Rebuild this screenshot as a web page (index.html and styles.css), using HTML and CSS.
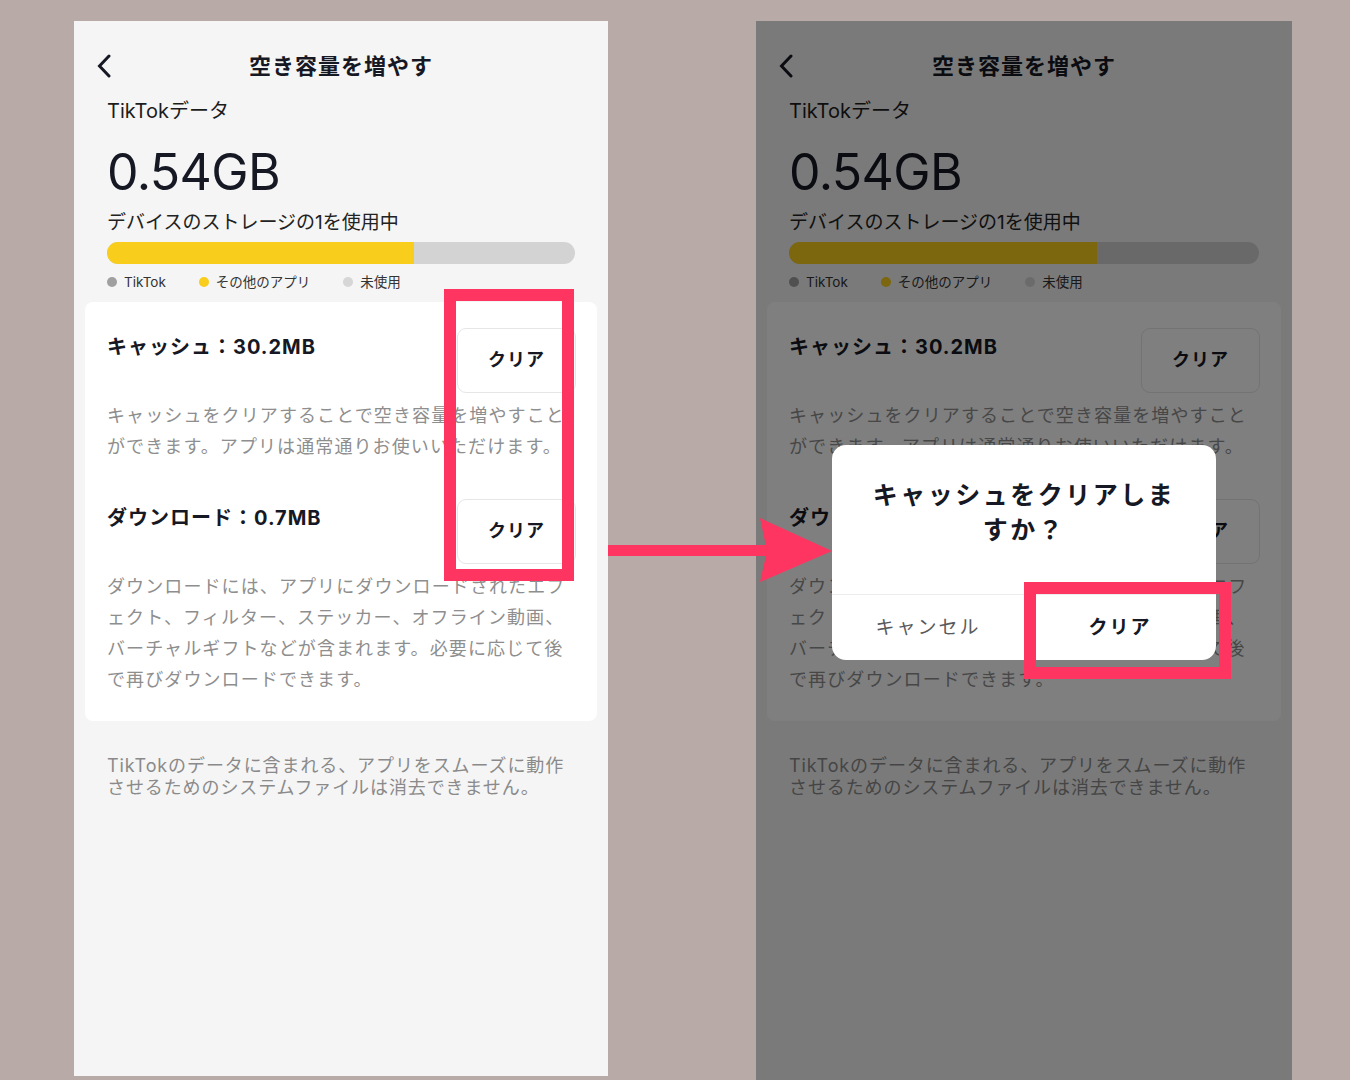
FILE: index.html
```html
<!DOCTYPE html>
<html lang="ja">
<head>
<meta charset="utf-8">
<title>空き容量を増やす</title>
<link rel="stylesheet" href="styles.css">
</head>
<body>
<div class="stage">
  <div class="phone phone-left">
    <header class="nav">
      <svg class="back" viewBox="0 0 14 24"><path d="M12 2 L2.5 12 L12 22"/></svg>
      <h1 class="nav-title">空き容量を増やす</h1>
      <span></span>
    </header>
    <div class="summary">
      <p class="data-label">TikTokデータ</p>
      <p class="data-size">0.54GB</p>
      <p class="data-usage">デバイスのストレージの1を使用中</p>
      <div class="bar"><div class="bar-fill" style="width:65.5%"></div></div>
      <ul class="legend">
        <li><span class="dot dot-tiktok"></span>TikTok</li>
        <li><span class="dot dot-other"></span>その他のアプリ</li>
        <li><span class="dot dot-free"></span>未使用</li>
      </ul>
    </div>
    <section class="card">
      <div class="item">
        <div class="item-head">
          <h2 class="item-title">キャッシュ：30.2MB</h2>
          <button class="clear-btn">クリア</button>
        </div>
        <p class="item-desc">キャッシュをクリアすることで空き容量を増やすこと<br>ができます。アプリは通常通りお使いいただけます。</p>
      </div>
      <div class="item">
        <div class="item-head">
          <h2 class="item-title">ダウンロード：0.7MB</h2>
          <button class="clear-btn">クリア</button>
        </div>
        <p class="item-desc">ダウンロードには、アプリにダウンロードされたエフ<br>ェクト、フィルター、ステッカー、オフライン動画、<br>バーチャルギフトなどが含まれます。必要に応じて後<br>で再びダウンロードできます。</p>
      </div>
    </section>
    <p class="footnote">TikTokのデータに含まれる、アプリをスムーズに動作<br>させるためのシステムファイルは消去できません。</p>
  </div>

  <div class="phone phone-right">
    <header class="nav">
      <svg class="back" viewBox="0 0 14 24"><path d="M12 2 L2.5 12 L12 22"/></svg>
      <h1 class="nav-title">空き容量を増やす</h1>
      <span></span>
    </header>
    <div class="summary">
      <p class="data-label">TikTokデータ</p>
      <p class="data-size">0.54GB</p>
      <p class="data-usage">デバイスのストレージの1を使用中</p>
      <div class="bar"><div class="bar-fill" style="width:65.5%"></div></div>
      <ul class="legend">
        <li><span class="dot dot-tiktok"></span>TikTok</li>
        <li><span class="dot dot-other"></span>その他のアプリ</li>
        <li><span class="dot dot-free"></span>未使用</li>
      </ul>
    </div>
    <section class="card">
      <div class="item">
        <div class="item-head">
          <h2 class="item-title">キャッシュ：30.2MB</h2>
          <button class="clear-btn">クリア</button>
        </div>
        <p class="item-desc">キャッシュをクリアすることで空き容量を増やすこと<br>ができます。アプリは通常通りお使いいただけます。</p>
      </div>
      <div class="item">
        <div class="item-head">
          <h2 class="item-title">ダウンロード：0.7MB</h2>
          <button class="clear-btn">クリア</button>
        </div>
        <p class="item-desc">ダウンロードには、アプリにダウンロードされたエフ<br>ェクト、フィルター、ステッカー、オフライン動画、<br>バーチャルギフトなどが含まれます。必要に応じて後<br>で再びダウンロードできます。</p>
      </div>
    </section>
    <p class="footnote">TikTokのデータに含まれる、アプリをスムーズに動作<br>させるためのシステムファイルは消去できません。</p>
    <div class="dim"></div>
    <div class="dialog">
      <p class="dialog-title">キャッシュをクリアしま<br>すか？</p>
      <div class="dialog-actions">
        <button class="dialog-btn dialog-cancel">キャンセル</button>
        <button class="dialog-btn dialog-confirm">クリア</button>
      </div>
    </div>
  </div>

  <svg class="arrow" viewBox="0 0 240 100">
    <rect x="8" y="45" width="164" height="11"/>
    <polygon points="160,18 232,51 160,82 167,51"/>
  </svg>
  <div class="mark mark-a"></div>
  <div class="mark mark-b"></div>
</div>
</body>
</html>
```

FILE: styles.css
```css
html, body {
  margin: 0;
  padding: 0;
}

body {
  background: #b8aaa6;
  font-family: Inter, "Noto Sans CJK JP", sans-serif;
  color: #161823;
}

.stage {
  position: relative;
  width: 1350px;
  height: 1080px;
  overflow: hidden;
  box-sizing: border-box;
  padding: 21px 0 0 74px;
  display: flex;
  align-items: flex-start;
  gap: 148px;
}

.phone {
  position: relative;
  flex: none;
  background: #f5f5f5;
  overflow: hidden;
}

.phone-left {
  width: 534px;
  height: 1055px;
}

.phone-right {
  width: 536px;
  height: 1059px;
}

/* header */
.nav {
  display: grid;
  grid-template-columns: 60px 1fr 60px;
  align-items: center;
  height: 30px;
  padding-top: 30px;
}

.back {
  width: 14px;
  height: 24px;
  margin-left: 23px;
}

.back path {
  fill: none;
  stroke: #161823;
  stroke-width: 3;
  stroke-linecap: round;
  stroke-linejoin: miter;
}

.nav-title {
  margin: 0;
  text-align: center;
  font-size: 22px;
  line-height: 30px;
  font-weight: 700;
  letter-spacing: 1px;
  color: #161823;
}

/* summary */
.summary {
  padding: 0 33px;
}

.data-label {
  margin: 17px 0 0;
  font-size: 20px;
  line-height: 26px;
  color: #1c1c1c;
}

.data-size {
  margin: 18px 0 0;
  font-size: 50px;
  line-height: 60px;
  letter-spacing: -0.6px;
  color: #161823;
}

.data-usage {
  margin: 8px 0 0;
  font-size: 19px;
  line-height: 26px;
  color: #222;
}

.bar {
  margin-top: 6px;
  height: 22px;
  border-radius: 11px;
  background: #d3d3d3;
  overflow: hidden;
}

.bar-fill {
  height: 100%;
  background: #f8cd1c;
}

.legend {
  list-style: none;
  margin: 9px 0 0;
  padding: 0;
  display: flex;
  gap: 33px;
  font-size: 13.5px;
  line-height: 18px;
  color: #333;
}

.legend li {
  display: flex;
  align-items: center;
  gap: 7px;
}

.dot {
  width: 10px;
  height: 10px;
  border-radius: 50%;
}

.dot-tiktok { background: #a0a0a0; }
.dot-other { background: #f8cd1c; }
.dot-free { background: #d6d6d6; }

/* card */
.card {
  margin: 11px 11px 0;
  background: #fff;
  border-radius: 8px;
  padding: 26px 21px 26px 22px;
}

.item + .item {
  margin-top: 37px;
}

.item-head {
  display: flex;
  justify-content: space-between;
  align-items: flex-start;
}

.item-title {
  margin: 0;
  padding-top: 5px;
  font-size: 20px;
  line-height: 28px;
  font-weight: 700;
  letter-spacing: 1px;
  color: #161823;
}

.clear-btn {
  width: 119px;
  height: 65px;
  border: 1px solid #e6e6e6;
  border-radius: 9px;
  background: #fff;
  font-family: inherit;
  font-size: 18px;
  font-weight: 700;
  letter-spacing: 1px;
  color: #161823;
  padding: 0 0 5px;
}

.item-desc {
  margin: 7px 0 0;
  font-size: 18px;
  line-height: 31px;
  letter-spacing: 1.1px;
  white-space: nowrap;
  color: #8e8e8e;
}

.footnote {
  margin: 34px 0 0;
  padding: 0 33px;
  font-size: 18px;
  line-height: 22px;
  letter-spacing: 0.9px;
  white-space: nowrap;
  color: #8a8a8a;
}

/* dim + dialog */
.dim {
  position: absolute;
  inset: 0;
  background: rgba(0, 0, 0, 0.5);
}

.dialog {
  position: absolute;
  left: 76px;
  top: 424px;
  width: 384px;
  height: 215px;
  background: #fff;
  border-radius: 14px;
  overflow: hidden;
  display: flex;
  flex-direction: column;
}

.dialog-title {
  flex: 1;
  margin: 0;
  padding-top: 33px;
  text-align: center;
  font-size: 25px;
  line-height: 35px;
  font-weight: 700;
  letter-spacing: 2.5px;
  color: #161823;
}

.dialog-actions {
  display: grid;
  grid-template-columns: 1fr 1fr;
  height: 65px;
  border-top: 1px solid #ececec;
}

.dialog-btn {
  border: 0;
  background: none;
  font-family: inherit;
  font-size: 19px;
  letter-spacing: 2px;
  padding: 0 0 4px;
}

.dialog-cancel {
  color: #5a5a5a;
}

.dialog-confirm {
  color: #161823;
  font-weight: 700;
}

/* annotations */
.arrow {
  position: absolute;
  left: 600px;
  top: 500px;
  width: 240px;
  height: 100px;
  fill: #fe3560;
}

.mark {
  position: absolute;
  box-sizing: border-box;
  border: 12px solid #fe3560;
}

.mark-a {
  left: 444px;
  top: 289px;
  width: 130px;
  height: 292px;
}

.mark-b {
  left: 1024px;
  top: 582px;
  width: 207px;
  height: 97px;
}
```
